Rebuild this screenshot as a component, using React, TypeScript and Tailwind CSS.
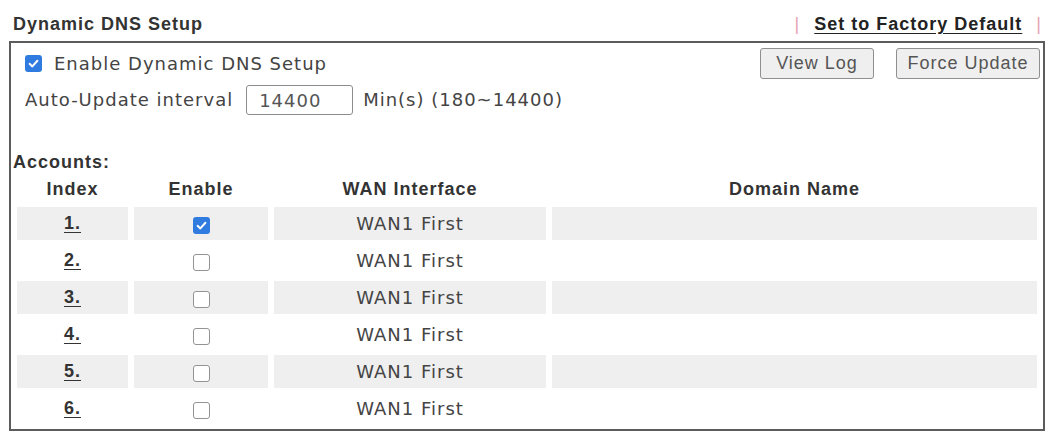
import React from "react";

const rows = [
  { idx: "1.", on: true },
  { idx: "2.", on: false },
  { idx: "3.", on: false },
  { idx: "4.", on: false },
  { idx: "5.", on: false },
  { idx: "6.", on: false },
];

function Check({ on }: { on: boolean }) {
  if (on) {
    return (
      <span className="inline-flex h-[17px] w-[17px] items-center justify-center rounded-[3px] bg-[#2f7be0] align-middle">
        <svg viewBox="0 0 16 16" className="h-[13px] w-[13px]">
          <path d="M3.2 8.4 L6.6 11.6 L12.8 4.6" fill="none" stroke="#fff" strokeWidth="2.4" strokeLinecap="round" strokeLinejoin="round" />
        </svg>
      </span>
    );
  }
  return <span className="inline-block h-[17px] w-[17px] rounded-[3px] border-[1.5px] border-[#939393] bg-white align-middle" />;
}

export default function App() {
  const bold = "font-['Liberation_Sans',Arial,sans-serif] font-bold text-[18px] tracking-[1px]";
  const reg = "font-['DejaVu_Sans',Verdana,sans-serif] text-[18px] tracking-[1px]";

  return (
    <div className="h-[431px] w-[1051px] overflow-hidden bg-white text-[#444]">
      {/* Title bar */}
      <div className="flex h-[41px] items-start justify-between pl-[13px] pr-[9px] pt-[14px] leading-[20px]">
        <div className={`${bold} text-[#333]`}>Dynamic DNS Setup</div>
        <div className={`${bold} flex items-center gap-[14px]`}>
          <span className="font-normal text-[#e7a2b5]">|</span>
          <span className="text-[#222] underline underline-offset-[3px]">Set to Factory Default</span>
          <span className="font-normal text-[#e7a2b5]">|</span>
        </div>
      </div>

      {/* Box */}
      <div className="ml-[9px] w-[1036px] border-2 border-[#5c5c5c]">
        <div className="flex items-center justify-between pl-[14px] pr-[3px] pt-[5px]">
          <label className="flex items-center gap-[12px]">
            <Check on />
            <span className={`${reg} leading-[20px]`}>Enable Dynamic DNS Setup</span>
          </label>
          <div className="flex gap-[22px]">
            <button className="h-[31px] w-[114px] rounded-[3px] border border-[#8f8f8f] bg-[#efefef] font-['Liberation_Sans',Arial,sans-serif] text-[18px] tracking-[1px] text-[#555]">
              View Log
            </button>
            <button className="h-[31px] w-[144px] rounded-[3px] border border-[#8f8f8f] bg-[#efefef] font-['Liberation_Sans',Arial,sans-serif] text-[18px] tracking-[1px] text-[#555]">
              Force Update
            </button>
          </div>
        </div>

        <div className="mt-[6px] flex items-center pl-[14px]">
          <span className={`${reg} leading-[20px]`}>Auto-Update interval</span>
          <div className={`${reg} ml-[13px] flex h-[30px] w-[107px] items-center rounded-[3px] border border-[#8c8c8c] pl-[12px] text-[#555]`}>
            14400
          </div>
          <span className={`${reg} ml-[10px] leading-[20px]`}>Min(s) (180~14400)</span>
        </div>

        <div className={`${bold} mt-[37px] pl-[2px] leading-[20px] text-[#333]`}>Accounts:</div>

        <table className="w-full border-separate border-spacing-x-[6px] border-spacing-y-[4px]">
          <thead>
            <tr className={`${bold} h-[27px] text-[#333]`}>
              <th className="w-[111px] font-bold">Index</th>
              <th className="w-[134px] font-bold">Enable</th>
              <th className="w-[272px] font-bold">WAN Interface</th>
              <th className="font-bold">Domain Name</th>
            </tr>
          </thead>
          <tbody>
            {rows.map((r, i) => {
              const bg = i % 2 === 0 ? "bg-[#efefef]" : "bg-white";
              return (
                <tr key={r.idx} className="h-[33px]">
                  <td className={`${bg} ${bold} p-0 text-center text-[#333]`}>
                    <span className="underline underline-offset-[3px]">{r.idx}</span>
                  </td>
                  <td className={`${bg} p-0 text-center`}>
                    <Check on={r.on} />
                  </td>
                  <td className={`${bg} ${reg} p-0 text-center text-[#444]`}>WAN1 First</td>
                  <td className={`${bg} p-0`}></td>
                </tr>
              );
            })}
          </tbody>
        </table>
      </div>
    </div>
  );
}
